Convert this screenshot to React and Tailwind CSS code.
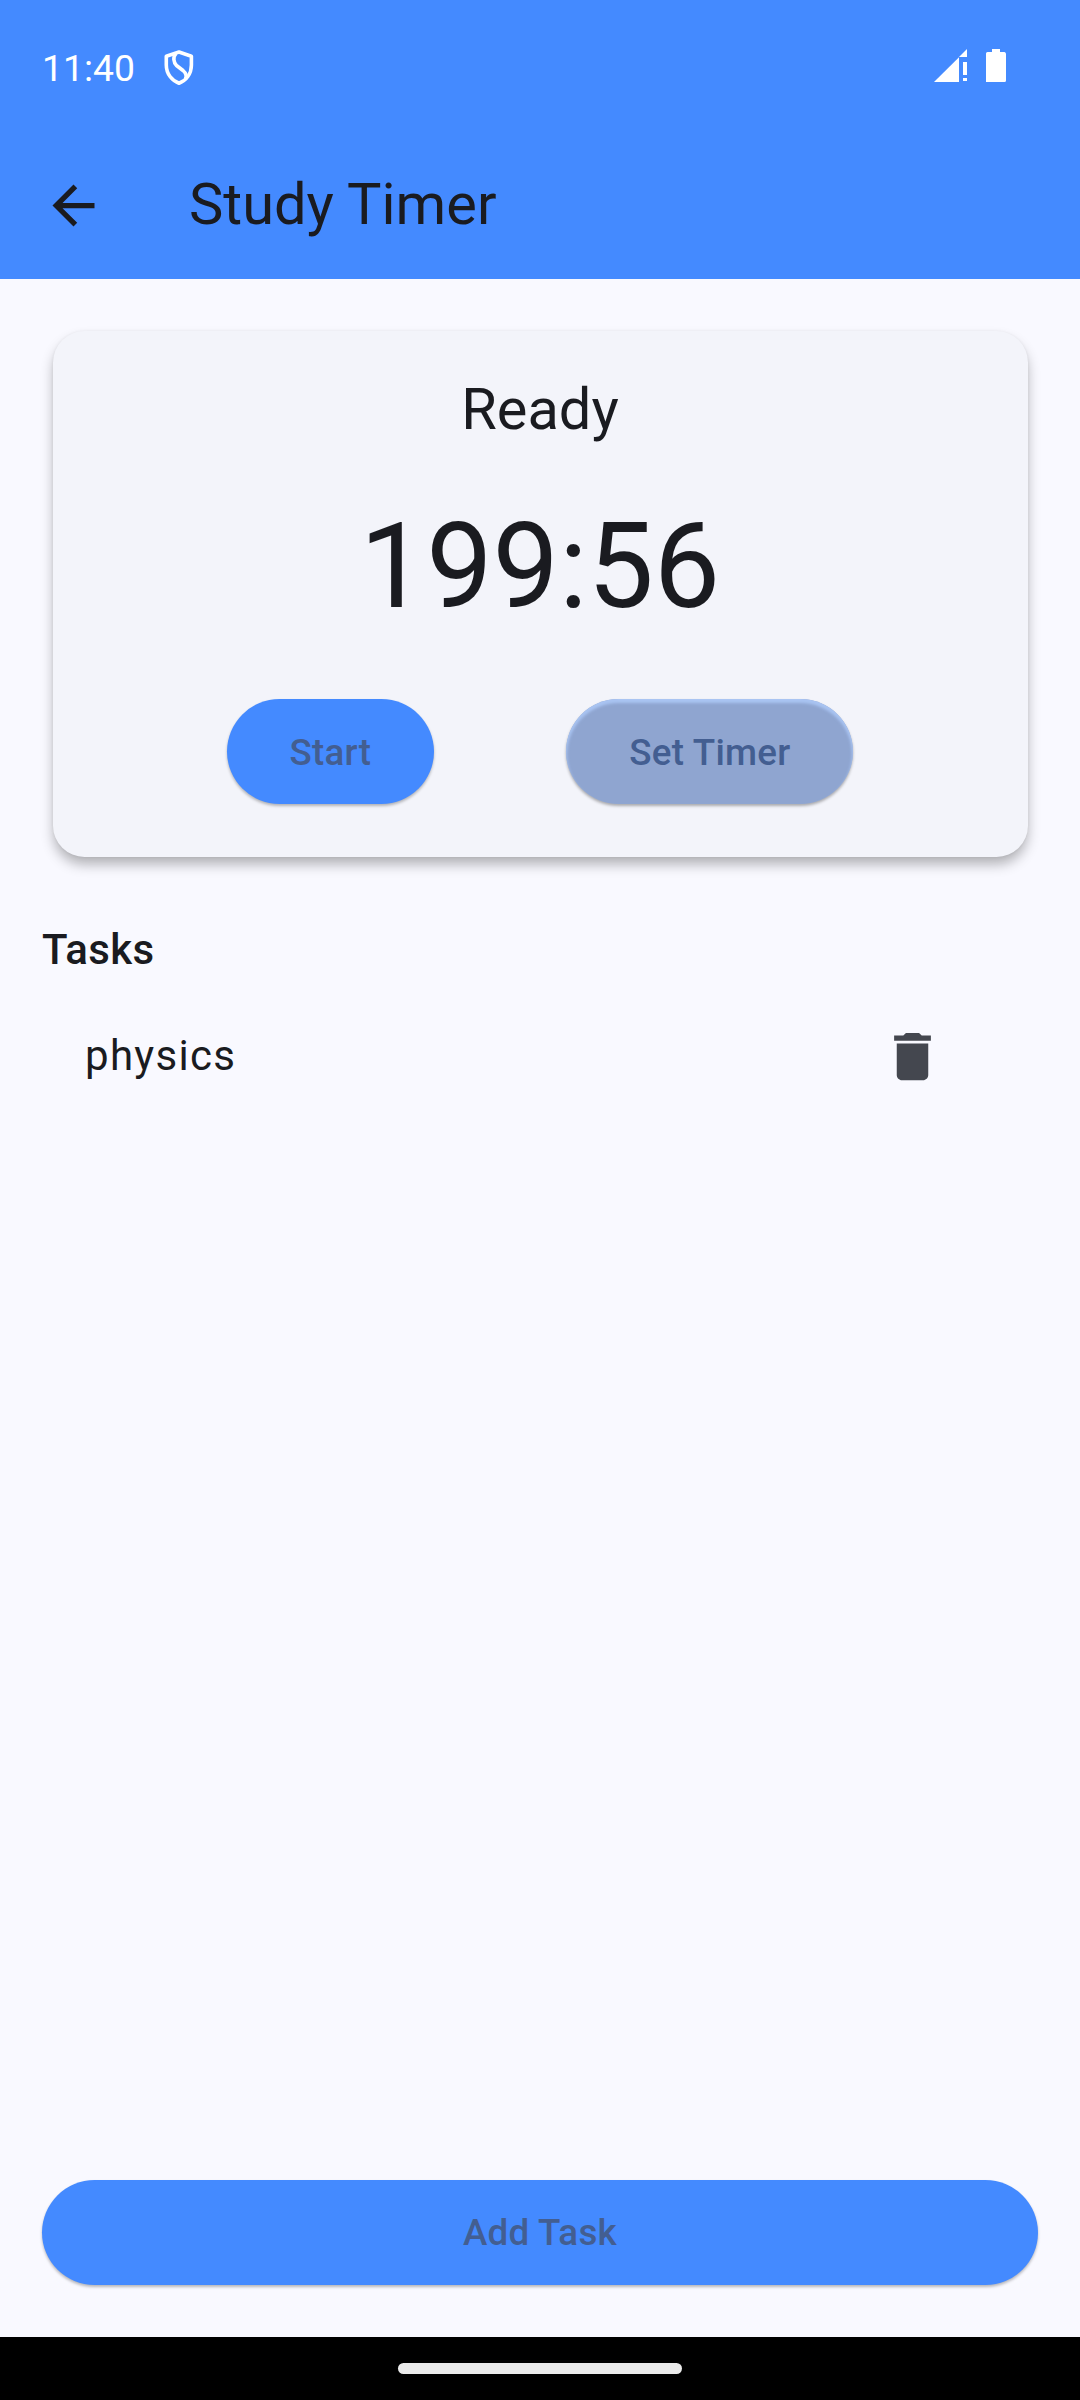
import React from "react";

function ShieldIcon() {
  return (
    <svg className="h-[36px] w-[30px]" viewBox="0 0 30 36" fill="none" stroke="#fff" strokeWidth="3.6" strokeLinejoin="round">
      <path d="M15 2 L27.4 6.2 V15 C27.4 24 22 30.5 15 33.2 C8 30.5 2.3 24 2.3 15 V6.2 Z" />
      <path d="M12 3.5 C8.6 7 9.6 12.5 12.5 15.5 L19 20.5 C22.4 23.5 23 26 21.5 29" />
    </svg>
  );
}

function SignalIcon() {
  return (
    <svg className="h-[33px] w-[33px]" viewBox="0 0 33 33" fill="#fff">
      <path d="M0 33 L25 8.3 V33 Z" />
      <path d="M33 0 V8 H25 Z" />
      <rect x="29" y="13" width="4" height="13" />
      <rect x="29" y="29" width="4" height="3" />
    </svg>
  );
}

function BatteryIcon() {
  return (
    <svg className="h-[33px] w-[20px]" viewBox="0 0 20 33" fill="#fff">
      <path d="M6 0 H14 V3 H18.5 Q20 3.5 20 5 V31.5 Q20 33 18.5 33 H0 V4.5 Q0 3 1.5 3 H6 Z" />
    </svg>
  );
}

function StatusBar() {
  return (
    <div className="flex h-[132px] items-start justify-between pl-[42px] pr-[74px] text-white">
      <div className="flex items-start pt-[46px]">
        <span className="w-[121.5px] text-[37.3px] leading-[44px]">11:40</span>
        <div className="pt-[4px]">
          <ShieldIcon />
        </div>
      </div>
      <div className="flex gap-[19px] pt-[49px]">
        <SignalIcon />
        <BatteryIcon />
      </div>
    </div>
  );
}

function AppBar() {
  return (
    <div className="flex h-[147px] items-center pl-[42px]">
      <svg className="h-[63px] w-[63px]" viewBox="0 0 24 24" fill="#1a1b20">
        <path d="M20 11H7.83l5.59-5.59L12 4l-8 8 8 8 1.41-1.41L7.83 13H20v-2z" />
      </svg>
      <h1 className="mb-[2px] ml-[84px] text-[57.75px] leading-[73px]">Study Timer</h1>
    </div>
  );
}

function TimerCard() {
  return (
    <section className="mx-[52.5px] mt-[52px] flex h-[525.5px] flex-col items-center rounded-[31.5px] bg-[#f3f4fa] px-[42px] pt-[42px] shadow-[0_8px_13px_-1px_rgba(0,0,0,0.3),0_0_3px_rgba(0,0,0,0.06)]">
      <div className="text-[57.75px] leading-[73.5px]">Ready</div>
      <div className="mt-[52.5px] text-[118.125px] leading-[136.5px]">199:56</div>
      <div className="mt-[63.5px] flex w-full justify-evenly">
        <button className="h-[105px] rounded-full bg-[#448aff] px-[63px] pt-[2px] text-[36.75px] font-medium tracking-[0.26px] text-[#435e91] shadow-[0_2px_3px_rgba(0,0,0,0.27)]">
          Start
        </button>
        <button className="h-[105px] rounded-full bg-[#8fa5d0] px-[63px] pt-[2px] text-[36.75px] font-medium tracking-[0.26px] text-[#435e91] shadow-[0_2px_3px_rgba(0,0,0,0.3),inset_0_3px_3px_1px_#a9c4f2]">
          Set Timer
        </button>
      </div>
    </section>
  );
}

function TaskRow({ name }) {
  return (
    <li className="flex h-[147px] items-center justify-between pl-[85px] pr-[136.5px]">
      <span className="text-[42px] leading-[63px] tracking-[1.31px]">{name}</span>
      <svg className="mt-[2px] h-[63px] w-[63px]" viewBox="0 0 24 24" fill="#44474f">
        <path d="M6 19c0 1.1.9 2 2 2h8c1.1 0 2-.9 2-2V7H6v12zM19 4h-3.5l-1-1h-5l-1 1H5v2h14V4z" />
      </svg>
    </li>
  );
}

export default function App() {
  return (
    <div className="flex h-[2400px] w-[1080px] flex-col overflow-hidden bg-[#f9f9ff] font-[Roboto,sans-serif] text-[#1a1b20]">
      <header className="h-[279px] shrink-0 bg-[#448aff]">
        <StatusBar />
        <AppBar />
      </header>
      <main className="flex flex-1 flex-col">
        <TimerCard />
        <h2 className="ml-[42px] mt-[61px] text-[42px] font-medium leading-[63px] tracking-[0.39px]">Tasks</h2>
        <ul className="mt-[1.5px]">
          <TaskRow name="physics" />
        </ul>
        <button className="mx-[42px] mb-[52.5px] mt-auto h-[105px] rounded-full bg-[#448aff] pt-[2px] text-[36.75px] font-medium tracking-[0.26px] text-[#435e91] shadow-[0_2px_3px_rgba(0,0,0,0.27)]">
          Add Task
        </button>
      </main>
      <footer className="flex h-[63px] shrink-0 justify-center bg-black pt-[26px]">
        <div className="h-[11px] w-[284px] rounded-full bg-[#ebebeb]" />
      </footer>
    </div>
  );
}
